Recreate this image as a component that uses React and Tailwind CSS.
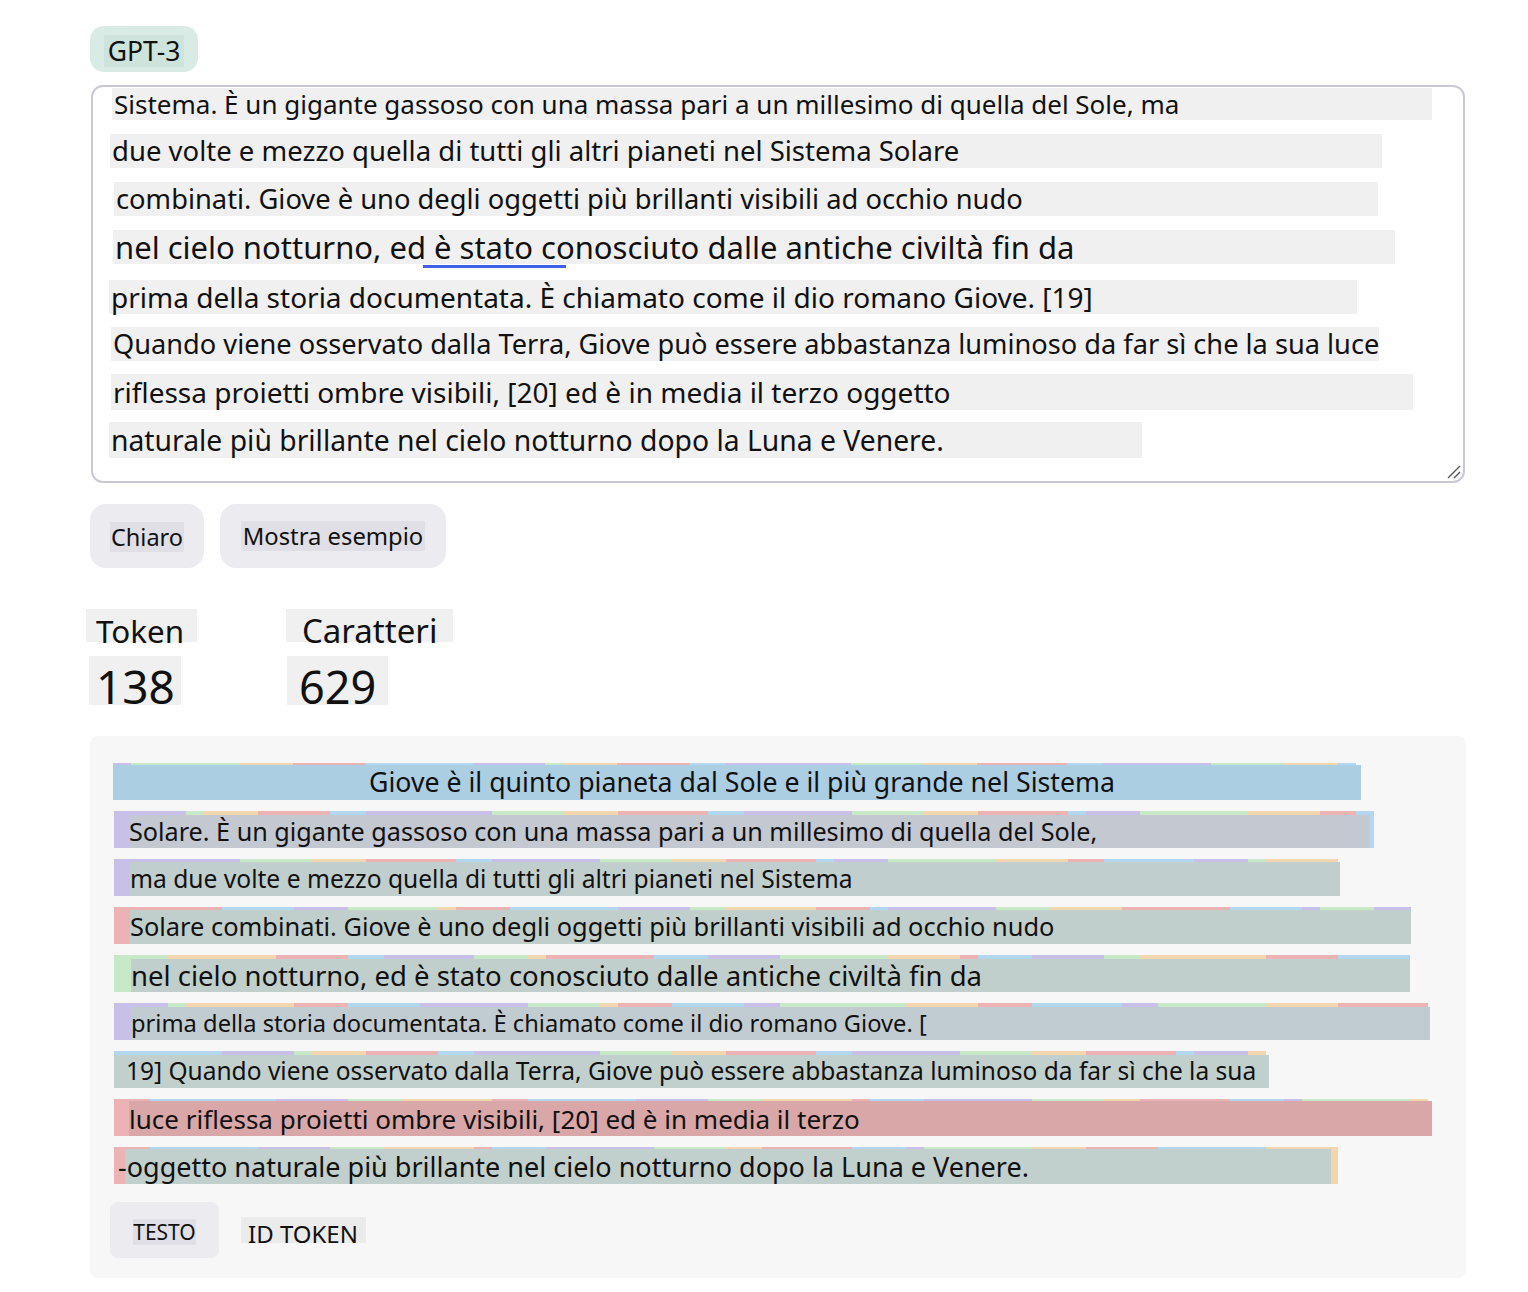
import React from "react";

const FONT = { fontFamily: '"Noto Sans", "Open Sans", sans-serif' };

// token stripe colours, in the order they repeat
const STRIPES = ["#c9c0ea", "#c8e9c8", "#f1d6b0", "#ebb3b3", "#b3d7ef"];
const WIDTHS = [18, 108, 54, 72, 108, 72, 18, 54, 72, 36, 126, 72, 54, 90, 36, 108, 72, 54, 90, 18, 54, 108, 72, 36, 90, 54];

const textLines = [
  { cls: "mt-[1px] ml-[19px] w-[1320px] h-[32px] text-[26px]", text: "Sistema. È un gigante gassoso con una massa pari a un millesimo di quella del Sole, ma" },
  { cls: "mt-[14px] ml-[17px] w-[1272px] h-[34px] text-[27.5px]", text: "due volte e mezzo quella di tutti gli altri pianeti nel Sistema Solare" },
  { cls: "mt-[14px] ml-[21px] w-[1264px] h-[34px] text-[27.3px]", text: "combinati. Giove è uno degli oggetti più brillanti visibili ad occhio nudo" },
  { cls: "mt-[14px] ml-[20px] w-[1282px] h-[34px] text-[31px]", text: "nel cielo notturno, ed è stato conosciuto dalle antiche civiltà fin da", underline: true },
  { cls: "mt-[16px] ml-[16px] w-[1248px] h-[34px] text-[28px]", text: "prima della storia documentata. È chiamato come il dio romano Giove. [19]" },
  { cls: "mt-[13px] ml-[18px] w-[1268px] h-[34px] text-[27.2px]", text: "Quando viene osservato dalla Terra, Giove può essere abbastanza luminoso da far sì che la sua luce" },
  { cls: "mt-[13px] ml-[18px] w-[1302px] h-[36px] text-[28px]", text: "riflessa proietti ombre visibili, [20] ed è in media il terzo oggetto" },
  { cls: "mt-[12px] ml-[16px] w-[1033px] h-[36px] text-[28.3px]", text: "naturale più brillante nel cielo notturno dopo la Luna e Venere." },
];

// x values are page coordinates; panel starts at x=90
const tokenRows = [
  { sL: 113, sR: 1356, oL: 113, oR: 1361, oT: 2, bg: "#abcee3", c0: 0, pad: 256, size: 26.7, end: 4, text: "Giove è il quinto pianeta dal Sole e il più grande nel Sistema" },
  { sL: 114, sR: 1374, oL: 129, oR: 1370, oT: 4, bg: "#c4c8d1", c0: 0, pad: 0, size: 25.2, end: 4, text: "Solare. È un gigante gassoso con una massa pari a un millesimo di quella del Sole," },
  { sL: 114, sR: 1338, oL: 130, oR: 1340, oT: 3, bg: "#c0cecd", c0: 0, pad: 0, size: 24.6, end: 2, text: "ma due volte e mezzo quella di tutti gli altri pianeti nel Sistema" },
  { sL: 114, sR: 1411, oL: 130, oR: 1411, oT: 3, bg: "#c0cfcc", c0: 3, pad: 0, size: 25.4, end: 0, text: "Solare combinati. Giove è uno degli oggetti più brillanti visibili ad occhio nudo" },
  { sL: 114, sR: 1410, oL: 131, oR: 1410, oT: 4, bg: "#c0cfcc", c0: 1, pad: 0, size: 27.5, end: 4, text: "nel cielo notturno, ed è stato conosciuto dalle antiche civiltà fin da" },
  { sL: 114, sR: 1428, oL: 131, oR: 1430, oT: 4, bg: "#c1ccd1", c0: 0, pad: 0, size: 23.7, end: 3, text: "prima della storia documentata. È chiamato come il dio romano Giove. [" },
  { sL: 114, sR: 1266, oL: 114, oR: 1269, oT: 4, bg: "#c1d0cd", c0: 4, pad: 12, size: 24.5, end: 2, text: "19] Quando viene osservato dalla Terra, Giove può essere abbastanza luminoso da far sì che la sua" },
  { sL: 114, sR: 1428, oL: 129, oR: 1432, oT: 2, bg: "#d9a7a7", c0: 3, pad: 0, size: 26, end: 2, text: "luce riflessa proietti ombre visibili, [20] ed è in media il terzo" },
  { sL: 114, sR: 1338, oL: 125, oR: 1331, oT: 2, bg: "#c1d0cc", c0: 3, pad: 0, shift: -7, size: 27, end: 2, text: "-oggetto naturale più brillante nel cielo notturno dopo la Luna e Venere." },
];

const segmentsFor = (row, r) => {
  const total = row.sR - row.sL;
  const out = [];
  let used = 0;
  let i = (r * 5) % WIDTHS.length;
  let c = row.c0;
  while (used < total) {
    const w = Math.min(WIDTHS[i % WIDTHS.length], total - used);
    out.push({ w, color: STRIPES[c % STRIPES.length] });
    used += w;
    i++;
    c++;
  }
  if (row.end !== undefined) out[out.length - 1].color = STRIPES[row.end];
  return out;
};

const TokenRow = ({ row, r }) => (
  <div className="relative h-[37px]" style={{ marginLeft: row.sL - 90 }}>
    <div className="flex h-full">
      {segmentsFor(row, r).map((s, k) => (
        <div key={k} className="h-full" style={{ width: s.w, backgroundColor: s.color }} />
      ))}
    </div>
    <div
      className="absolute flex items-center whitespace-nowrap text-[#111] leading-none"
      style={{
        left: row.oL - row.sL,
        top: row.oT,
        width: row.oR - row.oL,
        bottom: 0,
        backgroundColor: row.bg,
        paddingLeft: row.pad,
        fontSize: row.size,
      }}
    >
      <span style={{ marginLeft: row.shift || 0 }}>{row.text}</span>
    </div>
  </div>
);

export default function App() {
  return (
    <div className="min-h-[1292px] bg-white pt-[26px] text-[#111]" style={FONT}>
      {/* model pill */}
      <div className="ml-[90px] flex h-[46px] w-[108px] items-center justify-center rounded-[14px] bg-[#d8ebe4]">
        <span className="mt-[4px] bg-[#cde3db] px-[4px] text-[26.5px] leading-[32px]">GPT-3</span>
      </div>

      {/* text input */}
      <div className="relative ml-[91px] mt-[13px] h-[398px] w-[1374px] rounded-[12px] border-2 border-[#c9c8d6]">
        <div className="flex flex-col">
          {textLines.map((l, i) => (
            <div key={i} className={`relative flex items-center whitespace-nowrap bg-[#f0f0f0] pl-[2px] leading-none ${l.cls}`}>
              {l.text}
              {l.underline && <div className="absolute left-[310px] top-[35px] h-[3px] w-[143px] bg-[#3f5fe6]" />}
            </div>
          ))}
        </div>
        <svg className="absolute bottom-[1px] right-[1px]" width="16" height="16" viewBox="0 0 16 16">
          <path d="M14 2 L2 14 M14 8 L8 14" stroke="#555" strokeWidth="1.4" fill="none" />
        </svg>
      </div>

      {/* buttons */}
      <div className="ml-[90px] mt-[21px] flex gap-[16px]">
        <div className="flex h-[64px] w-[114px] items-center justify-center rounded-[16px] bg-[#ebebf0]">
          <span className="mt-[2px] bg-[#e0dfe6] px-[1px] text-[23.5px] leading-[30px]">Chiaro</span>
        </div>
        <div className="flex h-[64px] w-[226px] items-center justify-center rounded-[16px] bg-[#ebebf0]">
          <span className="bg-[#e0dfe6] px-[2px] text-[23.8px] leading-[30px]">Mostra esempio</span>
        </div>
      </div>

      {/* counts */}
      <div className="mt-[41px] flex">
        <div className="ml-[86px] flex w-[200px] flex-col items-start">
          <div className="h-[33px] w-[111px] bg-[#f0f0f0] pl-[10px] text-[31.4px] leading-[44px]">Token</div>
          <div className="ml-[3px] mt-[14px] h-[49px] w-[92px] bg-[#f0f0f0] pl-[7px] pt-[6px] text-[46px] leading-[49px]">138</div>
        </div>
        <div className="flex flex-col items-start">
          <div className="h-[33px] w-[167px] bg-[#f0f0f0] pl-[16px] text-[33px] leading-[44px]">Caratteri</div>
          <div className="ml-[1px] mt-[14px] h-[49px] w-[101px] bg-[#f0f0f0] pl-[12px] pt-[6px] text-[45px] leading-[49px]">629</div>
        </div>
      </div>

      {/* tokenized output */}
      <div className="ml-[90px] mt-[31px] w-[1376px] rounded-[8px] bg-[#f7f7f7] pb-[20px] pt-[27px]">
        <div className="flex flex-col gap-[11px]">
          {tokenRows.map((row, r) => (
            <TokenRow key={r} row={row} r={r} />
          ))}
        </div>
        <div className="ml-[20px] mt-[18px] flex items-center gap-[22px]">
          <div className="flex h-[56px] w-[109px] items-center justify-center rounded-[8px] bg-[#ebebf0]">
            <span className="mt-[3px] bg-[#e0dfe6] text-[21px] leading-[26px]">TESTO</span>
          </div>
          <div className="h-[26px] w-[125px] bg-[#ebebeb] pl-[7px] text-[24px] leading-[33px]">ID TOKEN</div>
        </div>
      </div>
    </div>
  );
}
